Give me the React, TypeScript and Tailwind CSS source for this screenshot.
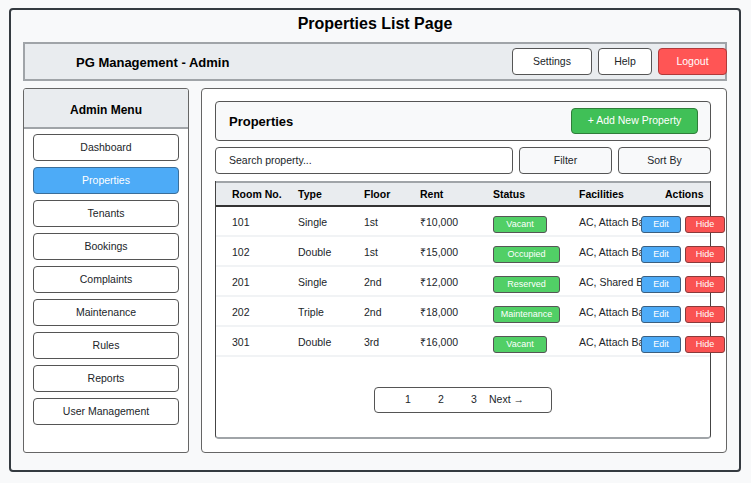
const MENU = [
  "Dashboard",
  "Properties",
  "Tenants",
  "Bookings",
  "Complaints",
  "Maintenance",
  "Rules",
  "Reports",
  "User Management",
];

type Room = {
  no: string;
  type: string;
  floor: string;
  rent: string;
  status: string;
  wide: boolean;
  facilities: string;
};

const ROOMS: Room[] = [
  { no: "101", type: "Single", floor: "1st", rent: "₹10,000", status: "Vacant", wide: false, facilities: "AC, Attach Bath" },
  { no: "102", type: "Double", floor: "1st", rent: "₹15,000", status: "Occupied", wide: true, facilities: "AC, Attach Bath" },
  { no: "201", type: "Single", floor: "2nd", rent: "₹12,000", status: "Reserved", wide: true, facilities: "AC, Shared Bath" },
  { no: "202", type: "Triple", floor: "2nd", rent: "₹18,000", status: "Maintenance", wide: true, facilities: "AC, Attach Bath" },
  { no: "301", type: "Double", floor: "3rd", rent: "₹16,000", status: "Vacant", wide: false, facilities: "AC, Attach Bath" },
];

export default function App() {
  return (
    <div
      className="h-[483px] w-[751px] overflow-hidden bg-[#f8f9fa] pl-[9px] pt-[8px] text-[#212529]"
      style={{ fontFamily: '"Liberation Sans", Arial, sans-serif' }}
    >
      <div className="flex h-[464px] w-[732px] flex-col rounded-[4px] border-2 border-[#343a40] px-[12px]">
        <div className="flex h-[32px] shrink-0 items-center justify-center pb-[4px] text-[16px] font-bold text-black">
          Properties List Page
        </div>

        {/* top bar */}
        <div className="flex h-[39px] shrink-0 items-center border-2 border-[#a0a4a8] bg-[#e9ecef]">
          <div className="pl-[51px] pt-[2px] text-[13px] font-bold text-black">PG Management - Admin</div>
          <div className="ml-auto flex h-[27px] items-center gap-[6px] -mr-[2px]">
            <button className="h-[27px] w-[80px] rounded-[4px] border border-[#555] bg-white text-[10.5px] text-[#212529]">
              Settings
            </button>
            <button className="h-[27px] w-[54px] rounded-[4px] border border-[#555] bg-white text-[10.5px] text-[#212529]">
              Help
            </button>
            <button className="h-[27px] w-[69px] rounded-[4px] border border-[#b03a3a] bg-[#ff5555] text-[10.5px] text-white">
              Logout
            </button>
          </div>
        </div>

        <div className="mt-[7px] flex h-[365px] gap-[12px]">
          {/* sidebar */}
          <div className="flex w-[166px] shrink-0 flex-col overflow-hidden rounded-[3px] border border-[#666] bg-white">
            <div className="flex h-[40px] items-center justify-center border-b-2 border-[#a0a4a8] bg-[#e9ecef] pt-[3px] text-[12px] font-bold text-black">
              Admin Menu
            </div>
            <div className="flex flex-col gap-[6px] px-[9px] pt-[5px]">
              {MENU.map((m) => (
                <div
                  key={m}
                  className={
                    m === "Properties"
                      ? "flex h-[27px] items-center justify-center rounded-[4px] border border-[#3b6e99] bg-[#4dabf7] text-[10.5px] text-white"
                      : "flex h-[27px] items-center justify-center rounded-[4px] border border-[#555] bg-white text-[10.5px] text-[#212529]"
                  }
                >
                  {m}
                </div>
              ))}
            </div>
          </div>

          {/* main */}
          <div className="flex w-[526px] shrink-0 flex-col rounded-[4px] border border-[#666] bg-white pl-[13px] pr-[15px] pt-[12px]">
            <div className="flex h-[40px] items-center rounded-[4px] border border-[#555] bg-[#f8f9fa] pl-[13px] pr-[12px]">
              <div className="pt-[1px] text-[13px] font-bold text-black">Properties</div>
              <button className="ml-auto h-[26px] w-[127px] rounded-[4px] border border-[#2f7d3a] bg-[#40c057] text-[10.5px] text-white">
                + Add New Property
              </button>
            </div>

            <div className="mt-[6px] flex h-[27px] gap-[6px]">
              <div className="flex w-[298px] items-center rounded-[4px] border border-[#555] bg-white pl-[13px] text-[10.5px] text-[#212529]">
                Search property...
              </div>
              <button className="w-[93px] rounded-[4px] border border-[#555] bg-[#f8f9fa] text-[10.5px] text-[#212529]">
                Filter
              </button>
              <button className="w-[93px] rounded-[4px] border border-[#555] bg-[#f8f9fa] text-[10.5px] text-[#212529]">
                Sort By
              </button>
            </div>

            {/* table */}
            <div className="mt-[7px] flex h-[258px] flex-col rounded-b-[4px] border-x border-b-2 border-x-[#444] border-b-[#a0a4a8]">
              <div className="flex h-[26px] shrink-0 items-center border-t-2 border-b-2 border-t-[#a0a4a8] border-b-[#333] bg-[#e9ecef] pl-[16px] pt-[2px] text-[10.5px] font-bold text-black">
                <div className="w-[66px]">Room No.</div>
                <div className="w-[66px]">Type</div>
                <div className="w-[56px]">Floor</div>
                <div className="w-[73px]">Rent</div>
                <div className="w-[86px]">Status</div>
                <div className="w-[86px]">Facilities</div>
                <div>Actions</div>
              </div>
              {ROOMS.map((r) => (
                <div
                  key={r.no}
                  className="flex h-[30px] shrink-0 items-center border-b-2 border-[#f1f3f5] pl-[16px] pt-[4px] text-[10.5px] text-[#212529]"
                >
                  <div className="w-[66px] shrink-0">{r.no}</div>
                  <div className="w-[66px] shrink-0">{r.type}</div>
                  <div className="w-[56px] shrink-0">{r.floor}</div>
                  <div className="w-[73px] shrink-0">{r.rent}</div>
                  <div className="w-[86px] shrink-0">
                    <div
                      className={
                        r.wide
                          ? "mt-[3px] flex h-[17px] w-[67px] items-center justify-center rounded-[3px] border border-[#555] bg-[#51cf66] text-[9px] text-white"
                          : "mt-[3px] flex h-[17px] w-[54px] items-center justify-center rounded-[3px] border border-[#555] bg-[#51cf66] text-[9px] text-white"
                      }
                    >
                      {r.status}
                    </div>
                  </div>
                  <div className="w-[62px] shrink-0 whitespace-nowrap">{r.facilities}</div>
                  <div className="mt-[3px] flex shrink-0 gap-[4px]">
                    <button className="h-[17px] w-[40px] rounded-[3px] border border-[#3b5f80] bg-[#4dabf7] text-[9px] text-white">
                      Edit
                    </button>
                    <button className="h-[17px] w-[40px] rounded-[3px] border border-[#8a3a3a] bg-[#fa5252] text-[9px] text-white">
                      Hide
                    </button>
                  </div>
                </div>
              ))}

              <div className="mx-auto mt-[30px] flex h-[26px] w-[178px] shrink-0 items-center rounded-[4px] border border-[#555] pl-[30px] text-[10.5px] text-[#212529]">
                <span className="w-[33px]">1</span>
                <span className="w-[33px]">2</span>
                <span className="w-[18px]">3</span>
                <span>Next →</span>
              </div>
            </div>
          </div>
        </div>
      </div>
    </div>
  );
}
